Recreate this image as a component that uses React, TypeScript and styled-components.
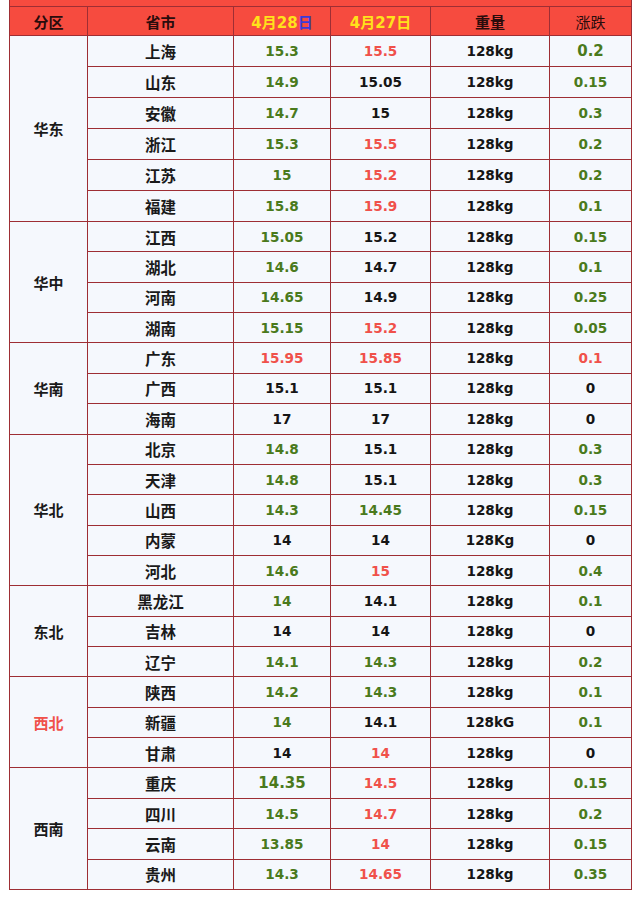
import React from 'react';
import styled, { createGlobalStyle } from 'styled-components';

const GlobalStyle = createGlobalStyle`
  html, body {
    margin: 0;
    padding: 0;
    background: #ffffff;
  }
  body {
    font-family: "Noto Sans CJK SC", "DejaVu Sans", sans-serif;
  }
`;

const Page = styled.div`
  width: 640px;
  height: 898px;
  padding-left: 9px;
  box-sizing: border-box;
  overflow: hidden;
`;

const Table = styled.div`
  width: 623px;
  display: grid;
  gap: 1px;
  background: #9e2e34;
  border: 1px solid #9e2e34;
  border-top: none;
  box-sizing: border-box;
`;

const TopStrip = styled.div`
  height: 6px;
  background: #f64b3f;
`;

const COLS = '145px 96px 99px 118px 81px';

const HeaderRow = styled.div`
  display: grid;
  grid-template-columns: 77px ${COLS};
  gap: 1px;
  height: 28px;
`;

const HeadCell = styled.div<{ $tone?: 'dark' | 'date'; $light?: boolean }>`
  background: #f64b3f;
  display: flex;
  align-items: center;
  justify-content: center;
  font-size: 15px;
  font-weight: ${p => (p.$light ? 400 : 700)};
  color: ${p => (p.$tone === 'date' ? '#ffe21a' : '#2a0c0c')};
  font-family: "DejaVu Sans", "Noto Sans CJK SC", sans-serif;
`;

const DayMark = styled.span`
  color: #3a3ad8;
  font-family: "Noto Sans CJK SC", sans-serif;
`;

const Section = styled.div`
  display: grid;
  grid-template-columns: 77px 1fr;
  gap: 1px;
`;

const RegionCell = styled.div<{ $red?: boolean }>`
  background: #f5f8fd;
  display: flex;
  align-items: center;
  justify-content: center;
  font-size: 15px;
  font-weight: 700;
  color: ${p => (p.$red ? '#f0514a' : '#1a1a1a')};
`;

const Rows = styled.div`
  display: grid;
  gap: 1px;
`;

const Row = styled.div<{ $tall?: boolean }>`
  display: grid;
  grid-template-columns: ${COLS};
  gap: 1px;
  height: ${p => (p.$tall ? '30px' : '29.36px')};
`;

const Cell = styled.div`
  background: #f5f8fd;
  display: flex;
  align-items: center;
  justify-content: center;
`;

const Province = styled(Cell)`
  font-size: 15.5px;
  font-weight: 700;
  color: #1a1a1a;
`;

const Num = styled(Cell)<{ $c: Tone; $big?: boolean }>`
  font-family: "DejaVu Sans", sans-serif;
  font-size: ${p => (p.$big ? '15px' : '13.6px')};
  font-weight: 700;
  color: ${p => toneColor[p.$c]};
`;

type Tone = 'g' | 'r' | 'k';

const toneColor: Record<Tone, string> = {
  g: '#4a7a1c',
  r: '#f0514a',
  k: '#151515',
};

type Item = {
  name: string;
  d28: [string, Tone];
  d27: [string, Tone];
  weight?: string;
  diff: [string, Tone];
  big28?: boolean;
  bigDiff?: boolean;
};

type Region = { name: string; red?: boolean; tall?: boolean; items: Item[] };

const data: Region[] = [
  {
    name: '华东',
    tall: true,
    items: [
      { name: '上海', d28: ['15.3', 'g'], d27: ['15.5', 'r'], diff: ['0.2', 'g'], bigDiff: true },
      { name: '山东', d28: ['14.9', 'g'], d27: ['15.05', 'k'], diff: ['0.15', 'g'] },
      { name: '安徽', d28: ['14.7', 'g'], d27: ['15', 'k'], diff: ['0.3', 'g'] },
      { name: '浙江', d28: ['15.3', 'g'], d27: ['15.5', 'r'], diff: ['0.2', 'g'] },
      { name: '江苏', d28: ['15', 'g'], d27: ['15.2', 'r'], diff: ['0.2', 'g'] },
      { name: '福建', d28: ['15.8', 'g'], d27: ['15.9', 'r'], diff: ['0.1', 'g'] },
    ],
  },
  {
    name: '华中',
    items: [
      { name: '江西', d28: ['15.05', 'g'], d27: ['15.2', 'k'], diff: ['0.15', 'g'] },
      { name: '湖北', d28: ['14.6', 'g'], d27: ['14.7', 'k'], diff: ['0.1', 'g'] },
      { name: '河南', d28: ['14.65', 'g'], d27: ['14.9', 'k'], diff: ['0.25', 'g'] },
      { name: '湖南', d28: ['15.15', 'g'], d27: ['15.2', 'r'], diff: ['0.05', 'g'] },
    ],
  },
  {
    name: '华南',
    items: [
      { name: '广东', d28: ['15.95', 'r'], d27: ['15.85', 'r'], diff: ['0.1', 'r'] },
      { name: '广西', d28: ['15.1', 'k'], d27: ['15.1', 'k'], diff: ['0', 'k'] },
      { name: '海南', d28: ['17', 'k'], d27: ['17', 'k'], diff: ['0', 'k'] },
    ],
  },
  {
    name: '华北',
    items: [
      { name: '北京', d28: ['14.8', 'g'], d27: ['15.1', 'k'], diff: ['0.3', 'g'] },
      { name: '天津', d28: ['14.8', 'g'], d27: ['15.1', 'k'], diff: ['0.3', 'g'] },
      { name: '山西', d28: ['14.3', 'g'], d27: ['14.45', 'g'], diff: ['0.15', 'g'] },
      { name: '内蒙', d28: ['14', 'k'], d27: ['14', 'k'], weight: '128Kg', diff: ['0', 'k'] },
      { name: '河北', d28: ['14.6', 'g'], d27: ['15', 'r'], diff: ['0.4', 'g'] },
    ],
  },
  {
    name: '东北',
    items: [
      { name: '黑龙江', d28: ['14', 'g'], d27: ['14.1', 'k'], diff: ['0.1', 'g'] },
      { name: '吉林', d28: ['14', 'k'], d27: ['14', 'k'], diff: ['0', 'k'] },
      { name: '辽宁', d28: ['14.1', 'g'], d27: ['14.3', 'g'], diff: ['0.2', 'g'] },
    ],
  },
  {
    name: '西北',
    red: true,
    items: [
      { name: '陕西', d28: ['14.2', 'g'], d27: ['14.3', 'g'], diff: ['0.1', 'g'] },
      { name: '新疆', d28: ['14', 'g'], d27: ['14.1', 'k'], weight: '128kG', diff: ['0.1', 'g'] },
      { name: '甘肃', d28: ['14', 'k'], d27: ['14', 'r'], diff: ['0', 'k'] },
    ],
  },
  {
    name: '西南',
    items: [
      { name: '重庆', d28: ['14.35', 'g'], d27: ['14.5', 'r'], diff: ['0.15', 'g'], big28: true },
      { name: '四川', d28: ['14.5', 'g'], d27: ['14.7', 'r'], diff: ['0.2', 'g'] },
      { name: '云南', d28: ['13.85', 'g'], d27: ['14', 'r'], diff: ['0.15', 'g'] },
      { name: '贵州', d28: ['14.3', 'g'], d27: ['14.65', 'r'], diff: ['0.35', 'g'] },
    ],
  },
];

const App: React.FC = () => {
  return (
    <Page>
      <GlobalStyle />
      <Table>
        <TopStrip />
        <HeaderRow>
          <HeadCell>分区</HeadCell>
          <HeadCell>省市</HeadCell>
          <HeadCell $tone="date">
            4月28<DayMark>日</DayMark>
          </HeadCell>
          <HeadCell $tone="date">4月27日</HeadCell>
          <HeadCell>重量</HeadCell>
          <HeadCell $light>涨跌</HeadCell>
        </HeaderRow>
        {data.map(region => (
          <Section key={region.name}>
            <RegionCell $red={region.red}>{region.name}</RegionCell>
            <Rows>
              {region.items.map(item => (
                <Row key={item.name} $tall={region.tall}>
                  <Province>{item.name}</Province>
                  <Num $c={item.d28[1]} $big={item.big28}>{item.d28[0]}</Num>
                  <Num $c={item.d27[1]}>{item.d27[0]}</Num>
                  <Num $c="k">{item.weight || '128kg'}</Num>
                  <Num $c={item.diff[1]} $big={item.bigDiff}>{item.diff[0]}</Num>
                </Row>
              ))}
            </Rows>
          </Section>
        ))}
      </Table>
    </Page>
  );
};

export default App;
